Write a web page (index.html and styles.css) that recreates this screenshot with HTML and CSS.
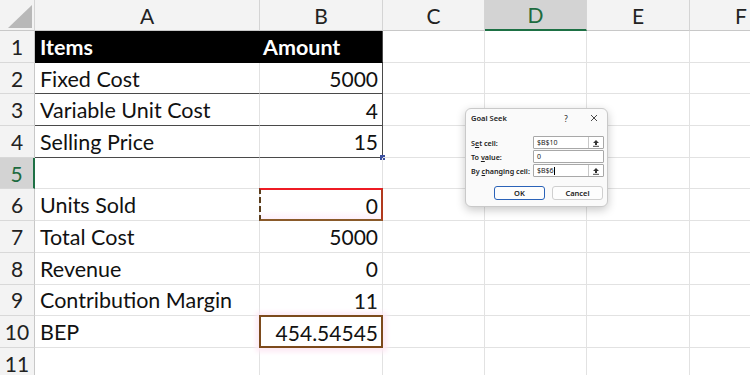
FILE: index.html
```html
<!DOCTYPE html>
<html lang="en">
<head>
  <meta charset="UTF-8">
  <title>Goal Seek - Break Even</title>
  <link rel="stylesheet" href="styles.css">
</head>
<body>
  <div class="window">
  <div class="sheet">
    <div class="corner">
      <svg width="35" height="31" viewBox="0 0 35 31"><polygon points="32,5 32,28 8,28" fill="#b8b8b8"/></svg>
    </div>
    <div class="colh">A</div>
    <div class="colh">B</div>
    <div class="colh">C</div>
    <div class="colh active">D</div>
    <div class="colh">E</div>
    <div class="colh">F</div>

    <div class="rowh">1</div>
    <div class="cell head">Items</div>
    <div class="cell head tb-right">Amount</div>
    <div class="cell"></div><div class="cell"></div><div class="cell"></div><div class="cell"></div>

    <div class="rowh">2</div>
    <div class="cell tb-bottom">Fixed Cost</div>
    <div class="cell num tb-bottom tb-right">5000</div>
    <div class="cell"></div><div class="cell"></div><div class="cell"></div><div class="cell"></div>

    <div class="rowh">3</div>
    <div class="cell tb-bottom">Variable Unit Cost</div>
    <div class="cell num tb-bottom tb-right">4</div>
    <div class="cell"></div><div class="cell"></div><div class="cell"></div><div class="cell"></div>

    <div class="rowh">4</div>
    <div class="cell tb-bottom">Selling Price</div>
    <div class="cell num tb-bottom tb-right handle">15</div>
    <div class="cell"></div><div class="cell"></div><div class="cell"></div><div class="cell"></div>

    <div class="rowh active">5</div>
    <div class="cell"></div>
    <div class="cell"></div>
    <div class="cell"></div><div class="cell"></div><div class="cell"></div><div class="cell"></div>

    <div class="rowh">6</div>
    <div class="cell">Units Sold</div>
    <div class="cell num changing">0</div>
    <div class="cell"></div><div class="cell"></div><div class="cell"></div><div class="cell"></div>

    <div class="rowh">7</div>
    <div class="cell">Total Cost</div>
    <div class="cell num">5000</div>
    <div class="cell"></div><div class="cell"></div><div class="cell"></div><div class="cell"></div>

    <div class="rowh">8</div>
    <div class="cell">Revenue</div>
    <div class="cell num">0</div>
    <div class="cell"></div><div class="cell"></div><div class="cell"></div><div class="cell"></div>

    <div class="rowh">9</div>
    <div class="cell">Contribution Margin</div>
    <div class="cell num">11</div>
    <div class="cell"></div><div class="cell"></div><div class="cell"></div><div class="cell"></div>

    <div class="rowh">10</div>
    <div class="cell">BEP</div>
    <div class="cell num target">454.54545</div>
    <div class="cell"></div><div class="cell"></div><div class="cell"></div><div class="cell"></div>

    <div class="rowh">11</div>
    <div class="cell"></div>
    <div class="cell"></div>
    <div class="cell"></div><div class="cell"></div><div class="cell"></div><div class="cell"></div>
  </div>

  <div class="dialog">
    <div class="dialog-title">
      <span class="title-text">Goal Seek</span>
      <span class="title-help">?</span>
      <span class="title-close">
        <svg width="8" height="8" viewBox="0 0 8 8"><path d="M1 1 L7 7 M7 1 L1 7" stroke="#333" stroke-width="0.9"/></svg>
      </span>
    </div>
    <div class="form">
      <label class="field-label"><span>S<u>e</u>t cell:</span></label>
      <div class="field">
        <span class="field-value">$B$10</span>
        <span class="ref-btn">
          <svg width="8" height="8" viewBox="0 0 8 8"><path d="M4 1 L7 4 H5 V6 H3 V4 H1 Z" fill="#333"/><path d="M1 7.3 H7" stroke="#333" stroke-width="0.9"/></svg>
        </span>
      </div>
      <label class="field-label"><span>To <u>v</u>alue:</span></label>
      <div class="field">
        <span class="field-value">0</span>
      </div>
      <label class="field-label"><span>By <u>c</u>hanging cell:</span></label>
      <div class="field">
        <span class="field-value">$B$6<span class="caret"></span></span>
        <span class="ref-btn">
          <svg width="8" height="8" viewBox="0 0 8 8"><path d="M4 1 L7 4 H5 V6 H3 V4 H1 Z" fill="#333"/><path d="M1 7.3 H7" stroke="#333" stroke-width="0.9"/></svg>
        </span>
      </div>
    </div>
    <div class="buttons">
      <button class="btn default">OK</button>
      <button class="btn">Cancel</button>
    </div>
  </div>
  </div>
</body>
</html>
```

FILE: styles.css
```css
* {
  margin: 0;
  padding: 0;
  box-sizing: border-box;
}
body {
  background: #fff;
  font-family: Lato, "Open Sans", sans-serif;
}
.window {
  width: 750px;
  height: 375px;
  overflow: hidden;
  position: relative;
}
.sheet {
  display: grid;
  grid-template-columns: 35px 225px 123px 102px 102px 103px 103px;
  grid-template-rows: 31px repeat(11, 31.7px);
  width: 793px;
  color: #111;
}
.corner {
  background: #f3f3f3;
  border-right: 1px solid #d4d4d4;
  border-bottom: 1px solid #c8c8c8;
}
.corner svg {
  display: block;
}
.colh {
  background: #f3f3f3;
  border-right: 1px solid #d4d4d4;
  border-bottom: 1px solid #c8c8c8;
  font-size: 21px;
  display: flex;
  align-items: center;
  justify-content: center;
  color: #222;
}
.colh.active {
  background: #d3d3d3;
  color: #1d6b3f;
  border-bottom: 2px solid #1d7044;
}
.rowh {
  background: #f3f3f3;
  border-right: 1px solid #c8c8c8;
  border-bottom: 1px solid #d8d8d8;
  font-size: 21px;
  display: flex;
  align-items: center;
  justify-content: center;
  color: #222;
}
.rowh.active {
  background: #d3d3d3;
  color: #1d6b3f;
  border-right: 2px solid #1d7044;
}
.cell {
  border-right: 1px solid #e2e2e2;
  border-bottom: 1px solid #e2e2e2;
  font-size: 21.5px;
  padding: 1px 4px 0 5px;
  display: flex;
  align-items: center;
  white-space: nowrap;
  position: relative;
}
.cell.num {
  justify-content: flex-end;
  font-size: 21px;
}
.cell.head {
  background: #000;
  color: #fff;
  font-weight: bold;
  border-color: #000;
}
.cell.tb-bottom {
  border-bottom-color: #4a4a4a;
}
.cell.tb-right {
  border-right-color: #4a4a4a;
}
.cell.head.tb-right {
  padding-left: 3px;
}
.handle::after {
  content: "";
  position: absolute;
  right: -3px;
  bottom: -3px;
  width: 5px;
  height: 5px;
  background: #3b4fa0;
}
.changing {
  background: linear-gradient(#fff 70%, #fdeefb);
}
.changing::after {
  content: "";
  position: absolute;
  left: -1px;
  top: -1px;
  right: -1px;
  bottom: -1px;
  border-top: 2px solid #ee1b24;
  border-right: 2px solid #b13a1e;
  border-bottom: 2px solid #8a5a2a;
  border-left: 2px dashed #5b3d1c;
}
.target {
  box-shadow: 0 0 5px 4px #fdeaf5;
  z-index: 1;
}
.target::after {
  content: "";
  position: absolute;
  left: -1px;
  top: -1px;
  right: -1px;
  bottom: -1px;
  border: 2px solid #7c4a1c;
}

.dialog {
  position: absolute;
  left: 465px;
  top: 108px;
  width: 143px;
  height: 99px;
  background: #fafafa;
  border: 1px solid #c9c9c9;
  border-radius: 6px;
  box-shadow: 0 3px 10px rgba(0, 0, 0, 0.22);
  font-family: "Noto Sans", "Open Sans", sans-serif;
  font-size: 7.5px;
  color: #1a1a1a;
  z-index: 5;
  display: flex;
  flex-direction: column;
}
.dialog-title {
  display: flex;
  align-items: center;
  height: 18px;
  padding: 0 0 0 5px;
}
.title-text {
  flex: 1;
  font-weight: 600;
  font-size: 7.5px;
}
.title-help {
  width: 30px;
  text-align: center;
  font-size: 8px;
}
.title-close {
  width: 26px;
  display: flex;
  justify-content: center;
}
.form {
  display: grid;
  grid-template-columns: 62px 71px;
  row-gap: 1px;
  padding: 9px 4px 0 5px;
}
.field-label {
  font-weight: 600;
  font-size: 7.2px;
  display: flex;
  align-items: center;
  height: 13px;
  white-space: nowrap;
}
.field {
  height: 13px;
  background: #fff;
  border: 1px solid #a8a8a8;
  border-radius: 1px;
  display: flex;
  align-items: center;
}
.field-value {
  flex: 1;
  padding-left: 3px;
  font-size: 7px;
  display: flex;
  align-items: center;
}
.caret {
  display: inline-block;
  width: 0.6px;
  height: 8px;
  background: #000;
  margin-left: 0.5px;
}
.ref-btn {
  width: 15px;
  height: 100%;
  border-left: 1px solid #c8c8c8;
  display: flex;
  align-items: center;
  justify-content: center;
}
.buttons {
  display: flex;
  justify-content: flex-end;
  gap: 7px;
  padding: 9px 4px 0 0;
}
.btn {
  height: 14px;
  width: 51px;
  background: #fdfdfd;
  border: 1px solid #cfcfcf;
  border-radius: 3px;
  font-family: "Noto Sans", "Open Sans", sans-serif;
  font-size: 7.5px;
  font-weight: 600;
  color: #1a1a1a;
}
.btn.default {
  border-color: #2a62b8;
}
```
